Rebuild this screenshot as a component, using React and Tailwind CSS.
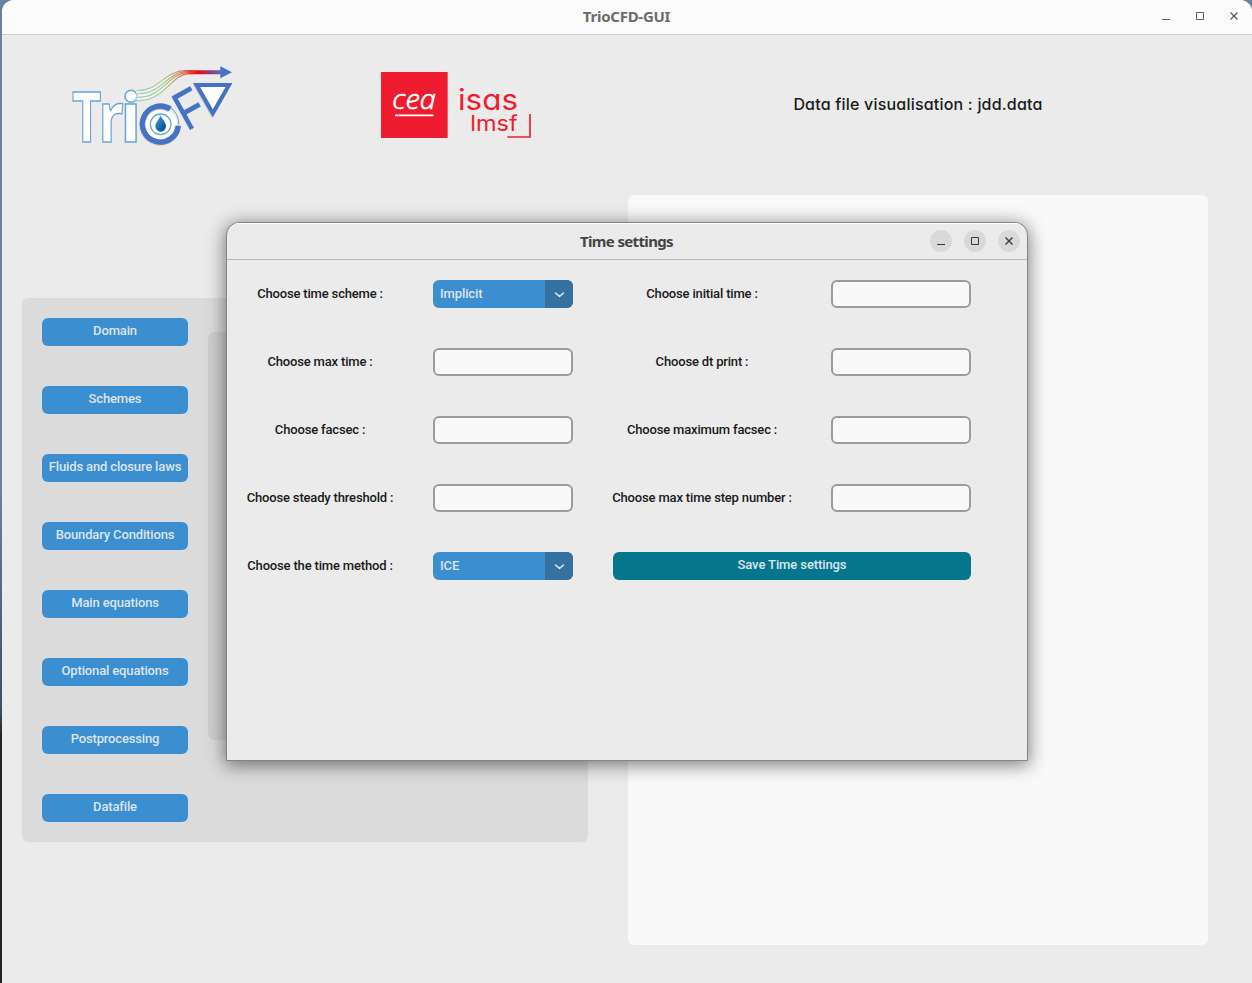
import React from "react";

const menu = [
  "Domain",
  "Schemes",
  "Fluids and closure laws",
  "Boundary Conditions",
  "Main equations",
  "Optional equations",
  "Postprocessing",
  "Datafile",
];

function TrioLogo() {
  return (
    <svg width="190" height="100" viewBox="0 0 570 300" className="shrink-0">
      <defs>
        <linearGradient id="flow" gradientUnits="userSpaceOnUse" x1="230" y1="0" x2="490" y2="0">
          <stop offset="0" stopColor="#9fd0c4" />
          <stop offset="0.3" stopColor="#a9cf9b" />
          <stop offset="0.45" stopColor="#c9a878" />
          <stop offset="0.58" stopColor="#e2574a" />
          <stop offset="0.7" stopColor="#f00808" />
          <stop offset="0.87" stopColor="#8a3f86" />
          <stop offset="1" stopColor="#4472c4" />
        </linearGradient>
        <linearGradient id="drop" x1="0" y1="0" x2="1" y2="1">
          <stop offset="0" stopColor="#3fa9dc" />
          <stop offset="1" stopColor="#003a8c" />
        </linearGradient>
        <clipPath id="stem">
          <rect x="185" y="143" width="60" height="135" />
        </clipPath>
      </defs>
      <g fill="#fff" stroke="#68a5dc" strokeWidth="4.5" fontFamily="Noto Sans, sans-serif" fontWeight="700" fontSize="211">
        <text x="36" y="262" textLength="88" lengthAdjust="spacingAndGlyphs">T</text>
        <text x="116" y="262" textLength="74" lengthAdjust="spacingAndGlyphs">r</text>
        <text x="181" y="262" clipPath="url(#stem)">i</text>
        <circle cx="213" cy="124" r="18" />
      </g>
      <path d="M229 107C300 109 310 48 376 47L400 56C330 60 312 142 226 137z" fill="#fff" fillOpacity=".45" />
      <g fill="none" stroke="url(#flow)" strokeWidth="4">
        <path d="M229 107C300 109 310 48 376 47H400" />
        <path d="M232 116C306 118 320 50 380 50H400" />
        <path d="M232 127C308 128 326 54 382 53H400" />
        <path d="M226 137C312 142 330 60 386 56H400" />
      </g>
      <path d="M372 46H482V58H386z" fill="url(#flow)" />
      <path d="M481 34L516 52L481 70z" fill="#4472c4" />
      <circle cx="302" cy="208" r="49" fill="#fff" />
      <path d="M329 162A53 53 0 1 0 355 211" fill="none" stroke="#8d8d8d" strokeOpacity=".5" strokeWidth="17" transform="translate(-2 2)" />
      <path d="M331 162A54 54 0 1 0 355 212" fill="none" stroke="#4472c4" strokeWidth="16" />
      <path d="M331 158Q356 174 357 210" fill="none" stroke="#68a5dc" strokeWidth="3" />
      <circle cx="302" cy="208" r="31" fill="#fff" stroke="#68a5dc" strokeWidth="4" />
      <path d="M302 181C306 193 318 203 318 214A16 16 0 0 1 286 214C286 203 298 193 302 181z" fill="url(#drop)" />
      <text
        transform="translate(381 229) rotate(-29)"
        fontFamily="Liberation Sans, sans-serif"
        fontSize="164"
        textLength="78"
        lengthAdjust="spacingAndGlyphs"
        fill="#4472c4"
        stroke="#4472c4"
        strokeWidth="2"
      >
        F
      </text>
      <path d="M410 90H507L458.500 175z" fill="#fff" stroke="#888" strokeOpacity=".45" strokeWidth="12" transform="translate(-2 2)" />
      <path d="M410 90H507L458.500 175z" fill="#fff" stroke="#4472c4" strokeWidth="12" />
    </svg>
  );
}

function CeaLogo() {
  return (
    <svg width="180" height="90" viewBox="0 0 540 270" className="shrink-0">
      <rect x="33" y="36" width="200" height="198" fill="#ee1c2e" />
      <text x="67" y="148" fontFamily="Open Sans, sans-serif" fontStyle="italic" fontWeight="300" fontSize="84" textLength="130" lengthAdjust="spacingAndGlyphs" fill="#fff" stroke="#fff" strokeWidth="2">cea</text>
      <path d="M75 166H191" stroke="#fff" strokeWidth="5" />
      <g
        fill="#ee1c2e"
        fontFamily="Inter, sans-serif"
        className="[font-feature-settings:'cv11']"
      >
        <text x="264" y="149" fontSize="86" textLength="180" lengthAdjust="spacingAndGlyphs">isas</text>
        <text x="301" y="213" fontSize="64" textLength="142" lengthAdjust="spacingAndGlyphs">lmsf</text>
      </g>
      <path d="M480 162V231H412" fill="none" stroke="#ee1c2e" strokeWidth="5" />
    </svg>
  );
}

function Controls({ dialog }) {
  const button = dialog
    ? "flex size-[22px] items-center justify-center rounded-full bg-[#d9d9d9]"
    : "flex size-[22px] items-center justify-center";
  const color = dialog ? "#3a3a3a" : "#5e5e5e";
  const shapes = ["M4 11.5H12", "M4.5 4.5H11.5V11.5H4.5z", "M4.5 4.5L11.5 11.5M11.5 4.5L4.5 11.5"];
  return (
    <div className="flex gap-3">
      {shapes.map((d, i) => (
        <div key={d} className={button}>
          <svg width="16" height="16" viewBox="0 0 16 16" fill="none" stroke={color} strokeWidth={i === 2 ? 1.4 : 1}>
            <path d={d} />
          </svg>
        </div>
      ))}
    </div>
  );
}

function Label({ children }) {
  return (
    <div className="flex h-7 items-center justify-center whitespace-nowrap text-[13px] font-medium tracking-[-0.17px] text-[#1a1a1a]">
      {children}
    </div>
  );
}

function Entry() {
  return <input className="block h-7 w-[140px] rounded-md border-2 border-[#979da2] bg-[#f9f9fa] outline-none" />;
}

function Select({ value }) {
  return (
    <div className="flex h-7 w-[140px] overflow-hidden rounded-md bg-[#3b8ed0] text-[13px] font-medium tracking-[-0.12px] text-[#dce4ee]">
      <div className="flex flex-1 items-center pl-[7px]">{value}</div>
      <div className="flex w-7 items-center justify-center bg-[#36719f]">
        <svg width="12" height="8" viewBox="0 0 12 8" fill="none" stroke="#dce4ee" strokeWidth="1.6" strokeLinecap="round" strokeLinejoin="round">
          <path d="M2.500 3L6.500 6.300L10.500 3" />
        </svg>
      </div>
    </div>
  );
}

function TimeSettings() {
  return (
    <section className="absolute left-[226px] top-[222px] flex h-[539px] w-[802px] flex-col overflow-hidden rounded-t-[13px] border border-[#858585] bg-[#ebebeb] shadow-[0_3px_18px_1px_rgba(0,0,0,0.5)]">
      <header className="grid h-[37px] shrink-0 grid-cols-[1fr_auto_1fr] items-center border-b border-[#b9b9b9] pr-[7px] shadow-[inset_0_1px_0_#fff]">
        <span />
        <h2 className="pl-[6px] font-['Noto_Sans'] text-[15px] font-bold tracking-[-0.65px] text-[#444444]">Time settings</h2>
        <div className="flex justify-end">
          <Controls dialog />
        </div>
      </header>
      <div className="grid grid-cols-[146px_140px_178px_140px] gap-10 p-5">
        <Label>Choose time scheme :</Label>
        <Select value="Implicit" />
        <Label>Choose initial time :</Label>
        <Entry />
        <Label>Choose max time :</Label>
        <Entry />
        <Label>Choose dt print :</Label>
        <Entry />
        <Label>Choose facsec :</Label>
        <Entry />
        <Label>Choose maximum facsec :</Label>
        <Entry />
        <Label>Choose steady threshold :</Label>
        <Entry />
        <Label>Choose max time step number :</Label>
        <Entry />
        <Label>Choose the time method :</Label>
        <Select value="ICE" />
        <button className="col-span-2 flex h-7 items-center justify-center rounded-md bg-[#06768d] pb-0.5 text-[13px] font-medium tracking-[-0.1px] text-[#dce4ee]">
          Save Time settings
        </button>
      </div>
    </section>
  );
}

export default function App() {
  return (
    <div className="relative h-[983px] w-[1252px] overflow-hidden bg-gradient-to-b from-[#6c7f9d] from-50% via-[#3d5068] via-72% to-[#24231c] to-75% pl-0.5 font-['Roboto',sans-serif]">
      <main className="flex h-full flex-col overflow-hidden rounded-t-[12px] bg-[#ebebeb]">
        <header className="grid h-[35px] shrink-0 grid-cols-[1fr_auto_1fr] items-center border-b border-[#cccccc] bg-[#fbfbfb] pr-[7px]">
          <span />
          <h1 className="pb-0.5 pl-[6px] font-['Noto_Sans'] text-[15px] font-bold tracking-[-0.25px] text-[#6c6c6c]">TrioCFD-GUI</h1>
          <div className="flex justify-end pb-0.5">
            <Controls />
          </div>
        </header>
        <div className="flex h-[160px] shrink-0 pl-[58px] pt-5">
          <TrioLogo />
          <div className="ml-[120px] pt-[5px]">
            <CeaLogo />
          </div>
          <div className="ml-[78px] flex h-[98px] w-[580px] items-center justify-center">
            <h2 className="whitespace-nowrap font-['Inter'] text-[16px] font-medium tracking-[0.2px] text-[#1a1a1a] [font-feature-settings:'cv11']">
              Data file visualisation : jdd.data
            </h2>
          </div>
        </div>
        <div className="flex items-center gap-10 pl-5">
          <nav className="flex h-[544px] w-[566px] gap-5 rounded-md bg-[#dbdbdb] p-5">
            <div className="flex flex-col gap-10">
              {menu.map((item) => (
                <button key={item} className="flex h-7 w-[146px] items-center justify-center whitespace-nowrap rounded-md bg-[#3b8ed0] pb-0.5 text-[13px] font-medium tracking-[-0.15px] text-[#dce4ee]">
                  {item}
                </button>
              ))}
            </div>
            <div className="mt-[14px] h-[408px] w-[360px] rounded-md bg-[#cfcfcf]" />
          </nav>
          <div className="h-[750px] w-[580px] rounded-md bg-[#f9f9fa]" />
        </div>
      </main>
      <TimeSettings />
    </div>
  );
}
